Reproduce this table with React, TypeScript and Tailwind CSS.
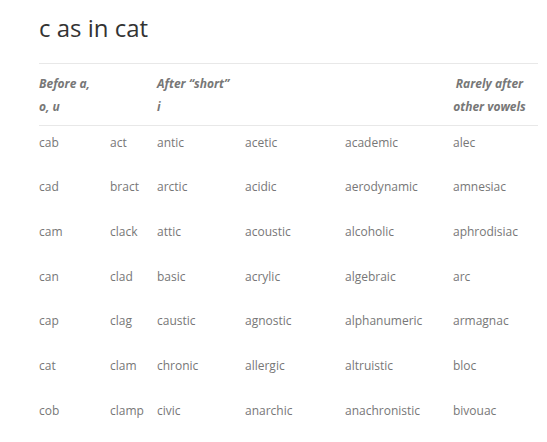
import React from "react";

const rows = [
  ["cab", "act", "antic", "acetic", "academic", "alec"],
  ["cad", "bract", "arctic", "acidic", "aerodynamic", "amnesiac"],
  ["cam", "clack", "attic", "acoustic", "alcoholic", "aphrodisiac"],
  ["can", "clad", "basic", "acrylic", "algebraic", "arc"],
  ["cap", "clag", "caustic", "agnostic", "alphanumeric", "armagnac"],
  ["cat", "clam", "chronic", "allergic", "altruistic", "bloc"],
  ["cob", "clamp", "civic", "anarchic", "anachronistic", "bivouac"],
];

const widths = ["w-[71px]", "w-[47px]", "w-[88px]", "w-[100px]", "w-[108px]", "w-[85px]"];

export default function App() {
  return (
    <div className="w-[547px] h-[442px] bg-white overflow-hidden pl-[39px] pr-[9px]" style={{ fontFamily: '"Open Sans", sans-serif' }}>
      <h1 className="text-[24px] leading-[32px] text-[#333] pt-[12px] m-0 font-normal">c as in cat</h1>
      <table className="mt-[19px] w-[499px] table-fixed border-collapse border-t border-[#e8e8e8]">
        <colgroup>
          {widths.map((w, i) => (
            <col key={i} className={w} />
          ))}
        </colgroup>
        <thead>
          <tr className="border-b border-[#e8e8e8]">
            <th className="text-left align-top font-bold italic text-[12px] leading-[23px] text-[#777] pt-[8px] pb-[7px] whitespace-nowrap">
              Before a,<br />o, u
            </th>
            <th></th>
            <th className="text-left align-top font-bold italic text-[12px] leading-[23px] text-[#777] pt-[8px] pb-[7px] whitespace-nowrap">
              After “short”<br />i
            </th>
            <th></th>
            <th></th>
            <th className="text-center align-top font-bold italic text-[12px] leading-[23px] text-[#777] pt-[8px] pb-[7px] pr-[12px] whitespace-nowrap">
              Rarely after<br />other vowels
            </th>
          </tr>
        </thead>
        <tbody>
          {rows.map((r, i) => (
            <tr key={i} className="h-[44.7px]">
              {r.map((c, j) => (
                <td key={j} className="text-left align-top text-[12px] leading-[18px] text-[#777] pt-[8px] whitespace-nowrap">
                  {c}
                </td>
              ))}
            </tr>
          ))}
        </tbody>
      </table>
    </div>
  );
}
